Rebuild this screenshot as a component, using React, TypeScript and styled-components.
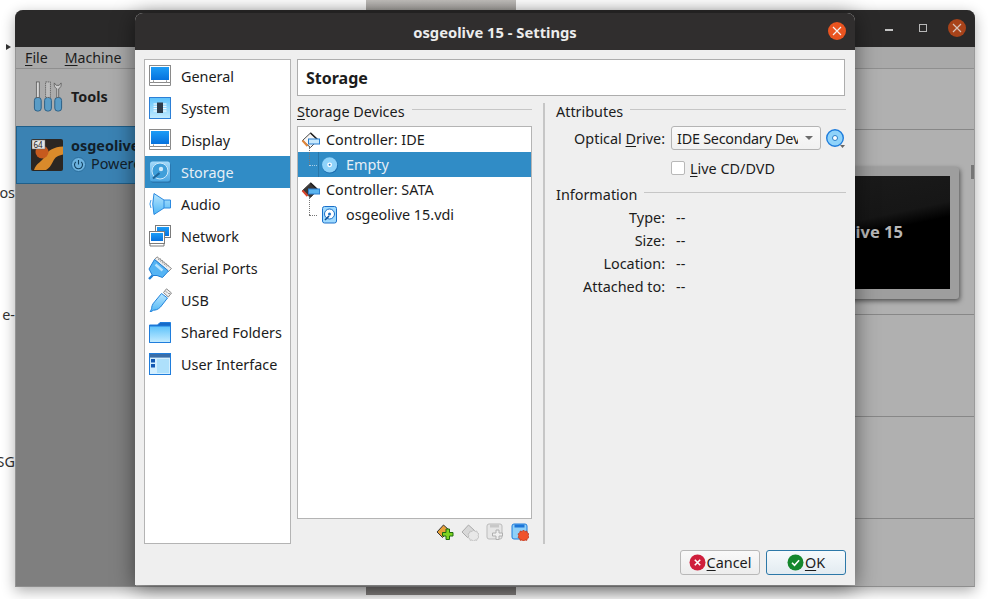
import React from "react";
import styled, { createGlobalStyle } from "styled-components";

const FONT = `"Noto Sans", "Open Sans", "DejaVu Sans", sans-serif`;

const Global = createGlobalStyle`
  html, body { margin: 0; padding: 0; background: #fff; overflow: hidden; }
  body { width: 988px; height: 599px; font-family: ${FONT}; font-size: 14.4px; color: #1c1c1c; }
  * { box-sizing: border-box; }
`;

const Desktop = styled.div`
  position: relative;
  width: 988px;
  height: 599px;
  overflow: hidden;
  background: #fff;
`;
const BackStrip = styled.div<{ $top: number; $h: number; $c: string }>`
  position: absolute;
  left: 366px;
  width: 150px;
  top: ${(p) => p.$top}px;
  height: ${(p) => p.$h}px;
  background: ${(p) => p.$c};
`;
const BackText = styled.span<{ $top: number }>`
  position: absolute;
  right: 973px;
  top: ${(p) => p.$top}px;
  font-size: 14.4px;
  line-height: 18px;
  color: #333;
  white-space: nowrap;
`;
const BackArrow = styled.span`
  position: absolute;
  left: 6px;
  top: 44px;
  width: 0;
  height: 0;
  border-left: 5px solid #333;
  border-top: 3px solid transparent;
  border-bottom: 3px solid transparent;
`;

const MainWindow = styled.div`
  position: absolute;
  left: 15px;
  top: 10px;
  width: 960px;
  height: 577px;
  border-radius: 8px 8px 0 0;
  background: #b0b0b0;
  box-shadow: 0 4px 14px rgba(0, 0, 0, 0.32);
  border-bottom: 1px solid #8e8e8e;
  border-left: 1px solid #949494;
  border-right: 1px solid #9a9a9a;
  display: flex;
  flex-direction: column;
`;
const MainTitle = styled.div`
  height: 37px;
  background: #2a2929;
  margin: 0 -1px;
  border-radius: 8px 8px 0 0;
  display: flex;
  justify-content: flex-end;
  align-items: center;
  gap: 16px;
  padding: 0 9px 1px 0;
`;
const WinMin = styled.span`
  width: 8px;
  height: 1.5px;
  background: #c4c4c4;
  margin: 4px 10px 0 0;
`;
const WinMax = styled.span`
  width: 8px;
  height: 8px;
  border: 1px solid #b8b8b8;
  margin-right: 5px;
`;
const WinClose = styled.span`
  width: 18px;
  height: 18px;
  border-radius: 50%;
  background: #a8431a;
  display: flex;
  align-items: center;
  justify-content: center;
`;
const MenuBar = styled.div`
  height: 22px;
  background: #a9a9a9;
  border-bottom: 1px solid #8f8f8f;
  display: flex;
  gap: 17px;
  align-items: center;
  padding-left: 9px;
  font-size: 14.2px;
`;
const U = styled.span`
  text-decoration: underline;
  text-underline-offset: 2px;
  text-decoration-thickness: 1px;
`;
const MainBody = styled.div`
  flex: 1;
  display: flex;
  min-height: 0;
`;
const LeftPane = styled.div`
  width: 120px;
  display: flex;
  flex-direction: column;
  background: #7f7f7f;
`;
const ToolsRow = styled.div`
  height: 57px;
  background: #ababab;
  display: flex;
  align-items: center;
  gap: 8px;
  padding: 0 0 2px 17px;
  font-weight: 700;
  font-size: 14.4px;
`;
const VmRow = styled.div`
  height: 58px;
  background: #3a82b3;
  border: 1px solid #1f5f8a;
  border-right: 0;
  display: flex;
  align-items: center;
  gap: 8px;
  padding-left: 14px;
  overflow: hidden;
`;
const VmText = styled.div`
  display: flex;
  flex-direction: column;
  line-height: 18px;
  white-space: nowrap;
  color: #12202a;
`;
const VmName = styled.b`
  font-weight: 700;
`;
const VmState = styled.span`
  display: flex;
  align-items: center;
  gap: 5px;
`;
const RightPane = styled.div`
  flex: 1;
  position: relative;
  display: flex;
  flex-direction: column;
`;
const PaneTop = styled.div`
  height: 61px;
  flex: none;
  border-bottom: 1px solid #878787;
`;
const PaneBand = styled.div<{ $h: number }>`
  height: ${(p) => p.$h}px;
  flex: none;
  border-bottom: 1px solid #878787;
  display: flex;
  justify-content: flex-end;
  align-items: flex-start;
`;
const Scroll = styled.span`
  position: absolute;
  right: 0;
  top: 96px;
  width: 3px;
  height: 14px;
  background: #767676;
`;
const Preview = styled.div`
  margin: 37px 15px 0 0;
  width: 200px;
  height: 132px;
  background: #9e9e9e;
  border-radius: 3px;
  box-shadow: 1px 2px 5px rgba(0, 0, 0, 0.55);
  padding: 9px;
`;
const PreviewScreen = styled.div`
  height: 113px;
  background: linear-gradient(168deg, #1c1c1c 0%, #161616 42%, #000 52%);
  display: flex;
  align-items: center;
  justify-content: flex-end;
  padding: 0 47px 2px 0;
  color: #b8b8b8;
  font-weight: 700;
  font-size: 16.5px;
`;

const Dialog = styled.div`
  position: absolute;
  left: 135px;
  top: 13px;
  width: 720px;
  height: 572px;
  background: #efefef;
  border-radius: 8px 8px 0 0;
  box-shadow: 0 3px 22px rgba(0, 0, 0, 0.5);
  display: flex;
  flex-direction: column;
`;
const DialogTitle = styled.div`
  position: relative;
  height: 37px;
  flex: none;
  background: #302e2e;
  border-radius: 8px 8px 0 0;
  color: #ececec;
  font-weight: 700;
  font-size: 14.75px;
  display: flex;
  align-items: center;
  justify-content: center;
`;
const DialogClose = styled.span`
  position: absolute;
  right: 9px;
  top: 9px;
  width: 18px;
  height: 18px;
  border-radius: 50%;
  background: #e95420;
  display: flex;
  align-items: center;
  justify-content: center;
`;
const DialogBody = styled.div`
  display: flex;
  gap: 6px;
  padding: 9px 9px 0;
  height: 494px;
`;
const Sidebar = styled.div`
  width: 147px;
  flex: none;
  background: #fff;
  border: 1px solid #b4b4b4;
  display: flex;
  flex-direction: column;
`;
const SideItem = styled.div<{ $selected?: boolean }>`
  height: 32px;
  flex: none;
  display: flex;
  align-items: center;
  gap: 9px;
  padding-left: 3px;
  background: ${(p) => (p.$selected ? "#308cc6" : "transparent")};
  color: ${(p) => (p.$selected ? "#e6eff6" : "#1c1c1c")};
  white-space: nowrap;
`;
const SideIcon = styled.svg`
  width: 24px;
  height: 24px;
  flex: none;
`;
const MainCol = styled.div`
  flex: 1;
  min-width: 0;
  display: flex;
  flex-direction: column;
`;
const Header = styled.div`
  height: 37px;
  flex: none;
  margin-right: 1px;
  background: #fff;
  border: 1px solid #adadad;
  display: flex;
  align-items: center;
  padding-left: 8px;
  font-weight: 700;
  font-size: 16px;
`;
const Panels = styled.div`
  flex: 1;
  display: flex;
  margin-top: 6px;
  min-height: 0;
`;
const DevicesPanel = styled.div`
  width: 235px;
  flex: none;
  display: flex;
  flex-direction: column;
`;
const Splitter = styled.div`
  width: 2px;
  flex: none;
  margin: 1px 11px 0;
  background: #c6c6c6;
`;
const AttrPanel = styled.div`
  width: 290px;
  flex: none;
  display: flex;
  flex-direction: column;
`;
const Legend = styled.div`
  height: 18px;
  flex: none;
  display: flex;
  align-items: center;
  gap: 7px;
  white-space: nowrap;
`;
const LegendLine = styled.span`
  flex: 1;
  height: 1px;
  background: #c6c6c6;
  margin-top: -3px;
`;
const Tree = styled.div`
  margin-top: 6px;
  height: 393px;
  flex: none;
  background: #fff;
  border: 1px solid #b4b4b4;
  display: flex;
  flex-direction: column;
`;
const TreeRow = styled.div<{ $selected?: boolean }>`
  height: 25px;
  flex: none;
  display: flex;
  align-items: center;
  background: ${(p) => (p.$selected ? "#308cc6" : "transparent")};
  color: ${(p) => (p.$selected ? "#e6eff6" : "#1c1c1c")};
  white-space: nowrap;
`;
const CtrlIcon = styled.svg`
  width: 20px;
  height: 20px;
  flex: none;
  margin: 0 5px 0 3px;
`;
const Branch = styled.span<{ $selected?: boolean }>`
  position: relative;
  width: 21px;
  height: 25px;
  flex: none;
  border-right: 1px solid ${(p) => (p.$selected ? "#2877aa" : "transparent")};
  &::before {
    content: "";
    position: absolute;
    left: 11px;
    top: -5px;
    height: 18px;
    border-left: 1px dotted #777;
  }
  &::after {
    content: "";
    position: absolute;
    left: 11px;
    top: 13px;
    width: 8px;
    border-top: 1px dotted ${(p) => (p.$selected ? "#a9cfe8" : "#777")};
  }
`;
const ChildIcon = styled.svg`
  width: 18px;
  height: 18px;
  flex: none;
  margin: 0 7px 0 2px;
`;
const TreeTools = styled.div`
  height: 25px;
  flex: none;
  display: flex;
  justify-content: flex-end;
  align-items: flex-start;
  gap: 7px;
  padding: 4px 3px 0 0;
`;
const ToolIcon = styled.svg`
  width: 18px;
  height: 18px;
  flex: none;
`;
const AttrBlock = styled.div`
  display: grid;
  grid-template-columns: 109px 1fr;
  column-gap: 6px;
  align-items: center;
`;
const FormLabel = styled.span`
  text-align: right;
  white-space: nowrap;
`;
const DriveLabel = styled(FormLabel)`
  margin-top: 6px;
`;
const DriveRow = styled.div`
  display: flex;
  align-items: center;
  gap: 4px;
  margin-top: 6px;
  grid-column: 2;
`;
const Combo = styled.div`
  width: 150px;
  height: 24px;
  flex: none;
  border: 1px solid #b4b4b4;
  border-radius: 3px;
  background: linear-gradient(#fafafa, #f1f1f1);
  display: flex;
  align-items: center;
  padding: 0 7px 0 5px;
`;
const ComboText = styled.span`
  flex: 1;
  overflow: hidden;
  white-space: nowrap;
  letter-spacing: -0.25px;
`;
const ComboArrow = styled.span`
  width: 0;
  height: 0;
  margin-left: 7px;
  border-top: 4px solid #6c6c6c;
  border-left: 4px solid transparent;
  border-right: 4px solid transparent;
`;
const CheckRow = styled.div`
  grid-column: 2;
  display: flex;
  align-items: center;
  gap: 5px;
  height: 18px;
  margin-top: 9px;
`;
const CheckBox = styled.span`
  width: 14px;
  height: 14px;
  background: #fff;
  border: 1px solid #b8b8b8;
  border-radius: 2px;
`;
const InfoLegend = styled(Legend)`
  margin-top: 8px;
`;
const InfoGrid = styled(AttrBlock)`
  margin-top: 3px;
  grid-auto-rows: 23px;
  & > span:nth-child(even) {
    padding-left: 5px;
  }
`;
const Footer = styled.div`
  flex: 1;
  display: flex;
  justify-content: flex-end;
  gap: 6px;
  padding: 6px 9px 0;
`;
const Btn = styled.div<{ $primary?: boolean }>`
  width: 80px;
  height: 25px;
  border: 1px solid ${(p) => (p.$primary ? "#2c78a8" : "#b8b8b8")};
  border-radius: 3px;
  background: ${(p) =>
    p.$primary ? "linear-gradient(#f6fafc, #e2ebf1)" : "linear-gradient(#f9f9f9, #ededed)"};
  display: flex;
  align-items: center;
  justify-content: center;
  gap: 1px;
`;
const BtnIcon = styled.svg`
  width: 17px;
  height: 17px;
  flex: none;
`;
const InlineIcon = styled.svg`
  flex: none;
`;
const HiddenDefs = styled.svg`
  position: absolute;
  width: 0;
  height: 0;
`;

const Cross = ({ c = "#f4f4f4" }: { c?: string }) => (
  <svg width="10" height="10" viewBox="0 0 10 10">
    <path d="M1 1l8 8M9 1l-8 8" stroke={c} strokeWidth="1.2" />
  </svg>
);

const Grad = () => (
  <HiddenDefs>
    <defs>
      <linearGradient id="scr" x1="0" y1="0" x2="0" y2="1">
        <stop offset="0" stopColor="#1c9cf6" />
        <stop offset="1" stopColor="#0672de" />
      </linearGradient>
      <linearGradient id="lite" x1="0" y1="0" x2="0" y2="1">
        <stop offset="0" stopColor="#5cc2fb" />
        <stop offset="1" stopColor="#c5ecff" />
      </linearGradient>
      <linearGradient id="lite2" x1="0" y1="0" x2="0" y2="1">
        <stop offset="0" stopColor="#b8e6ff" />
        <stop offset="1" stopColor="#4fb6f5" />
      </linearGradient>
      <linearGradient id="sel" x1="0" y1="0" x2="0" y2="1">
        <stop offset="0" stopColor="#a5dafa" />
        <stop offset="1" stopColor="#4aa6e2" />
      </linearGradient>
    </defs>
  </HiddenDefs>
);

const MonitorIcon = () => (
  <>
    <rect x="1.5" y="1.5" width="21" height="17" fill="#fff" stroke="#8a8a8a" />
    <rect x="3" y="3" width="18" height="13" fill="url(#scr)" />
    <path d="M1.5 18.5h21v3h-21z" fill="#fff" stroke="#8a8a8a" />
    <path d="M6 16l-1 3M18 16l1 3" stroke="#999" fill="none" />
    <path d="M6 16h12v1.5H6z" fill="#fff" />
  </>
);
const SystemIcon = () => (
  <>
    <rect x="1.5" y="1.5" width="21" height="21" fill="url(#lite)" stroke="#2c7fd6" />
    <path d="M5.5 8h3.5M5.5 10.3h3.5M5.5 12.6h3.5M5.5 15h3.5M15 8h3.5M15 10.3h3.5M15 12.6h3.5M15 15h3.5" stroke="#fff" strokeWidth="1" />
    <rect x="9" y="6.5" width="6" height="10.5" fill="#2d3b4a" />
  </>
);
const StorageIcon = () => (
  <>
    <rect x="3" y="3" width="20" height="20" rx="2.5" fill="#2a78b0" />
    <rect x="2" y="1.5" width="20" height="20" rx="2.5" fill="url(#sel)" />
    <circle cx="12" cy="11" r="8" fill="#3f9fda" stroke="#cfeafa" />
    <circle cx="13" cy="9" r="2.2" fill="#cfeafa" />
    <path d="M5 18.5l6.5-5.5" stroke="#1c659a" strokeWidth="2.2" />
  </>
);
const AudioIcon = () => (
  <>
    <path d="M3 8Q.8 12 3 16" stroke="#3f9ce8" fill="none" />
    <path d="M6 1.5L16 8h6.5v8H16L6 22.5Q3.5 12 6 1.5z" fill="url(#lite2)" stroke="#2c8ae0" />
    <path d="M16 8v8" stroke="#2c8ae0" />
  </>
);
const NetworkIcon = () => (
  <>
    <rect x="7.5" y="1.5" width="15" height="12" fill="#fff" stroke="#7b7b7b" />
    <rect x="9" y="3" width="12" height="9" fill="url(#scr)" />
    <rect x="1.5" y="7.5" width="15" height="12" fill="#fff" stroke="#7b7b7b" />
    <rect x="3" y="9" width="12" height="8" fill="url(#scr)" />
    <path d="M2 19.5h14v2.5H2z" fill="#fff" stroke="#7b7b7b" />
  </>
);
const SerialIcon = () => (
  <>
    <path d="M9 0.8L23.5 12.5 20.5 15.5 6.5 3.5z" fill="#ededed" stroke="#8d8d8d" />
    <path d="M10 3l9.5 8M12 2.5l9 7.5" stroke="#9a9a9a" strokeDasharray="1.5 1" />
    <path d="M6.5 3.5L20.5 15 14.5 21.5 9 19.5 4.5 19.5 1 13z" fill="#55b4f4" stroke="#1f7fd6" />
    <path d="M4.5 19.5L1 23" stroke="#1f7fd6" strokeWidth="2.4" />
    <path d="M7.5 8.5l7 6" stroke="#b7e4ff" strokeWidth="2.4" />
  </>
);
const UsbIcon = () => (
  <>
    <path d="M15.5 4.5L18.5 0.8 23.5 5l-3.2 4z" fill="#eee" stroke="#8a8a8a" />
    <path d="M18 3.5l1 1M20.5 5l1 1" stroke="#555" />
    <path d="M13.5 5.5l6 4.5-7 9c-3 3-5 3-7 3.2l-3.5 2 1.6-3.4c0-2 .6-4.5 3-7z" fill="url(#lite2)" stroke="#2283dc" />
  </>
);
const FolderIcon = () => (
  <>
    <path d="M1.5 5V22.5h21V2.5H12L9.5 5z" fill="#156ac7" stroke="#1f7ddc" />
    <path d="M1.5 6h21v16.5h-21z" fill="url(#lite)" stroke="#1f7ddc" />
  </>
);
const UiIcon = () => (
  <>
    <rect x="1.5" y="1.5" width="21" height="21" fill="#d3efff" stroke="#1f7ddc" />
    <rect x="2" y="2" width="20" height="3.6" fill="#3a6ea8" />
    <rect x="3" y="7" width="4" height="3.5" fill="#1459b3" />
    <rect x="3" y="12" width="4" height="3.5" fill="#1459b3" />
    <rect x="9" y="7" width="12" height="14" fill="#aee0fb" />
  </>
);

const side: { label: string; icon: React.ReactNode; sel?: boolean }[] = [
  { label: "General", icon: <MonitorIcon /> },
  { label: "System", icon: <SystemIcon /> },
  { label: "Display", icon: <MonitorIcon /> },
  { label: "Storage", icon: <StorageIcon />, sel: true },
  { label: "Audio", icon: <AudioIcon /> },
  { label: "Network", icon: <NetworkIcon /> },
  { label: "Serial Ports", icon: <SerialIcon /> },
  { label: "USB", icon: <UsbIcon /> },
  { label: "Shared Folders", icon: <FolderIcon /> },
  { label: "User Interface", icon: <UiIcon /> },
];

const ControllerGlyph = ({ dark, edge }: { dark?: boolean; edge: string }) => (
  <CtrlIcon viewBox="0 0 20 20">
    <path d="M1.5 10.5L9.5 3l7.5 7-7.5 7.5z" fill={dark ? "#3a3636" : "#f6f6f6"} stroke="#4a4a4a" />
    <path d="M9.5 3l7.5 7" stroke="#1e1e1e" strokeWidth="1.6" />
    <path d="M1.5 10.5l5 5.5" stroke={edge} strokeWidth="2" />
    <rect x="7.5" y="9" width="11" height="5" fill={dark ? "#5bb4ee" : "#c8e8fb"} stroke="#2b7fd0" />
  </CtrlIcon>
);
const CdGlyph = () => (
  <ChildIcon viewBox="0 0 18 18">
    <circle cx="9" cy="9.5" r="8" fill="#1d6fb0" />
    <circle cx="8.6" cy="8.8" r="7.6" fill="#8fd3fa" />
    <circle cx="8.6" cy="8.8" r="2.4" fill="#fff" />
    <circle cx="8.6" cy="8.8" r="1" fill="#2a7fc8" />
  </ChildIcon>
);
const DiskGlyph = () => (
  <ChildIcon viewBox="0 0 18 18">
    <rect x="1.5" y="0.5" width="14" height="16.5" rx="2" fill="#9fdaff" stroke="#1a6fc8" />
    <circle cx="8.5" cy="8" r="5" fill="#fff" stroke="#1a6fc8" />
    <circle cx="8.5" cy="8" r="1.5" fill="#1a6fc8" />
    <path d="M4 14l4-4" stroke="#0f4f95" strokeWidth="1.6" />
  </ChildIcon>
);

const Burst = ({ fill, stroke }: { fill: string; stroke: string }) => (
  <path
    d="M12.5 7l1.4 1.5 1.9-.5.5 1.9 1.7 1-.8 1.8.8 1.8-1.7 1-.5 1.9-1.9-.5-1.4 1.5-1.4-1.5-1.9.5-.5-1.9-1.7-1 .8-1.8-.8-1.8 1.7-1 .5-1.9 1.9.5z"
    fill={fill}
    stroke={stroke}
    strokeWidth="0.7"
  />
);

const info = [
  ["Type:", "--"],
  ["Size:", "--"],
  ["Location:", "--"],
  ["Attached to:", "--"],
];

export default function App() {
  return (
    <Desktop>
      <Global />
      <Grad />
      <BackStrip $top={0} $h={10} $c="linear-gradient(#c2bfbc, #aaa7a4)" />
      <BackStrip $top={587} $h={8} $c="#8b8886" />
      <BackArrow />
      <BackText $top={184}>os</BackText>
      <BackText $top={306}>e-</BackText>
      <BackText $top={453}>SG</BackText>

      <MainWindow>
        <MainTitle>
          <WinMin />
          <WinMax />
          <WinClose>
            <Cross c="#d8c4ba" />
          </WinClose>
        </MainTitle>
        <MenuBar>
          <span>
            <U>F</U>ile
          </span>
          <span>
            <U>M</U>achine
          </span>
        </MenuBar>
        <MainBody>
          <LeftPane>
            <ToolsRow>
              <InlineIcon width="30" height="33" viewBox="0 0 30 34">
                <g fill="#5a9cc6" stroke="#2b5f85">
                  <rect x="1" y="18" width="7" height="14" rx="3" />
                  <rect x="11.5" y="18" width="7" height="14" rx="3" />
                  <rect x="22" y="18" width="7" height="14" rx="3" />
                </g>
                <rect x="3" y="2" width="3" height="16" fill="#d8d8d8" stroke="#555" strokeWidth="0.8" />
                <rect x="12.5" y="2" width="5" height="16" fill="#bbb" stroke="#555" strokeWidth="0.8" strokeDasharray="1.5 0.7" />
                <path d="M24 18V9c-2-1-3-3-2.5-6l2 2.5h3L28.5 3c.5 3-.5 5-2.5 6v9z" fill="#ccc" stroke="#555" strokeWidth="0.8" />
              </InlineIcon>
              Tools
            </ToolsRow>
            <VmRow>
              <InlineIcon width="32" height="32" viewBox="0 0 32 32">
                <rect width="32" height="32" rx="2" fill="#2b2622" />
                <path d="M3 31C5 24 11 23 14 17 17 11 23 8 32 7.5v8c-5 1-8 2.500-10 7-2 4-4 7-7 8.500z" fill="#d98a2b" />
                <circle cx="11" cy="13" r="6.500" fill="#c65a1e" />
                <rect x="1" y="1" width="13" height="9" fill="#e4e4e4" stroke="#666" strokeWidth="0.5" />
                <text x="2.5" y="8.5" fontSize="8" fontFamily="Noto Sans, sans-serif" fill="#222">64</text>
              </InlineIcon>
              <VmText>
                <VmName>osgeolive 15</VmName>
                <VmState>
                  <InlineIcon width="15" height="15" viewBox="0 0 15 15">
                    <circle cx="7.5" cy="7.5" r="7" fill="#6cb2de" stroke="#2a6d9c" />
                    <path d="M4.8 4.8a4 4 0 1 0 5.4 0M7.5 3v4.5" stroke="#12405f" fill="none" strokeWidth="1.1" />
                  </InlineIcon>
                  Powered Off
                </VmState>
              </VmText>
            </VmRow>
          </LeftPane>
          <RightPane>
            <PaneTop />
            <PaneBand $h={185}>
              <Preview>
                <PreviewScreen>osgeolive 15</PreviewScreen>
              </Preview>
            </PaneBand>
            <PaneBand $h={102} />
            <PaneBand $h={102} />
            <Scroll />
          </RightPane>
        </MainBody>
      </MainWindow>

      <Dialog>
        <DialogTitle>
          osgeolive 15 - Settings
          <DialogClose>
            <Cross />
          </DialogClose>
        </DialogTitle>
        <DialogBody>
          <Sidebar>
            {side.map((s) => (
              <SideItem key={s.label} $selected={s.sel}>
                <SideIcon viewBox="0 0 24 24">{s.icon}</SideIcon>
                {s.label}
              </SideItem>
            ))}
          </Sidebar>
          <MainCol>
            <Header>Storage</Header>
            <Panels>
              <DevicesPanel>
                <Legend>
                  <span>
                    <U>S</U>torage Devices
                  </span>
                  <LegendLine />
                </Legend>
                <Tree>
                  <TreeRow>
                    <ControllerGlyph edge="#e0863a" />
                    Controller: IDE
                  </TreeRow>
                  <TreeRow $selected>
                    <Branch $selected />
                    <CdGlyph />
                    Empty
                  </TreeRow>
                  <TreeRow>
                    <ControllerGlyph dark edge="#d8432a" />
                    Controller: SATA
                  </TreeRow>
                  <TreeRow>
                    <Branch />
                    <DiskGlyph />
                    osgeolive 15.vdi
                  </TreeRow>
                </Tree>
                <TreeTools>
                  <ToolIcon viewBox="0 0 18 18">
                    <path d="M1 9l6.500-7 6 5.500-7 7z" fill="#e8a13a" stroke="#333" />
                    <path d="M10 6h3.500v3.500H17V13h-3.500v3.500H10V13H6.500V9.500H10z" fill="#7ed321" stroke="#1f6b10" />
                  </ToolIcon>
                  <ToolIcon viewBox="0 0 18 18">
                    <path d="M1 9l6.500-7 6 5.500-7 7z" fill="#d8d8d8" stroke="#aaa" />
                    <Burst fill="#e8e8e8" stroke="#b4b4b4" />
                  </ToolIcon>
                  <ToolIcon viewBox="0 0 18 18">
                    <rect x="1" y="1" width="15" height="15" rx="2" fill="#e6e6e6" stroke="#bbb" />
                    <rect x="4" y="1.5" width="9" height="3" fill="#c8c8c8" />
                    <path d="M10 7h3v3h3.500v3H13v3.500h-3V13H6.500v-3H10z" fill="#efefef" stroke="#b0b0b0" />
                  </ToolIcon>
                  <ToolIcon viewBox="0 0 18 18">
                    <rect x="1" y="1" width="15" height="15" rx="2" fill="#8fd0f8" stroke="#1f7ddc" />
                    <rect x="3.5" y="1.5" width="10" height="3" fill="#1c75d8" />
                    <Burst fill="#f0532c" stroke="#b8321a" />
                  </ToolIcon>
                </TreeTools>
              </DevicesPanel>
              <Splitter />
              <AttrPanel>
                <Legend>
                  <span>Attributes</span>
                  <LegendLine />
                </Legend>
                <AttrBlock>
                  <DriveLabel>
                    Optical <U>D</U>rive:
                  </DriveLabel>
                  <DriveRow>
                    <Combo>
                      <ComboText>IDE Secondary Device 0</ComboText>
                      <ComboArrow />
                    </Combo>
                    <InlineIcon width="21" height="21" viewBox="0 0 21 21">
                      <circle cx="10" cy="10" r="8.3" fill="#8fd3fa" stroke="#1f7ddc" strokeWidth="1.4" />
                      <circle cx="10" cy="10" r="2.5" fill="#fff" stroke="#2a7fc8" />
                      <path d="M15 17h5l-2.500 3z" fill="#666" />
                    </InlineIcon>
                  </DriveRow>
                  <CheckRow>
                    <CheckBox />
                    <span>
                      <U>L</U>ive CD/DVD
                    </span>
                  </CheckRow>
                </AttrBlock>
                <InfoLegend>
                  <span>Information</span>
                  <LegendLine />
                </InfoLegend>
                <InfoGrid>
                  {info.map(([k, v]) => (
                    <React.Fragment key={k}>
                      <FormLabel>{k}</FormLabel>
                      <span>{v}</span>
                    </React.Fragment>
                  ))}
                </InfoGrid>
              </AttrPanel>
            </Panels>
          </MainCol>
        </DialogBody>
        <Footer>
          <Btn>
            <BtnIcon viewBox="0 0 17 17">
              <circle cx="8.5" cy="8.5" r="8" fill="#cf1f3c" />
              <path d="M5.8 5.8l5.4 5.4M11.2 5.8l-5.4 5.4" stroke="#fff" strokeWidth="1.6" />
            </BtnIcon>
            <span>
              <U>C</U>ancel
            </span>
          </Btn>
          <Btn $primary>
            <BtnIcon viewBox="0 0 17 17">
              <circle cx="8.5" cy="8.5" r="8" fill="#14872d" />
              <path d="M5 8.8l2.5 2.5 4.6-5" stroke="#fff" fill="none" strokeWidth="1.6" />
            </BtnIcon>
            <span>
              <U>O</U>K
            </span>
          </Btn>
        </Footer>
      </Dialog>
    </Desktop>
  );
}
